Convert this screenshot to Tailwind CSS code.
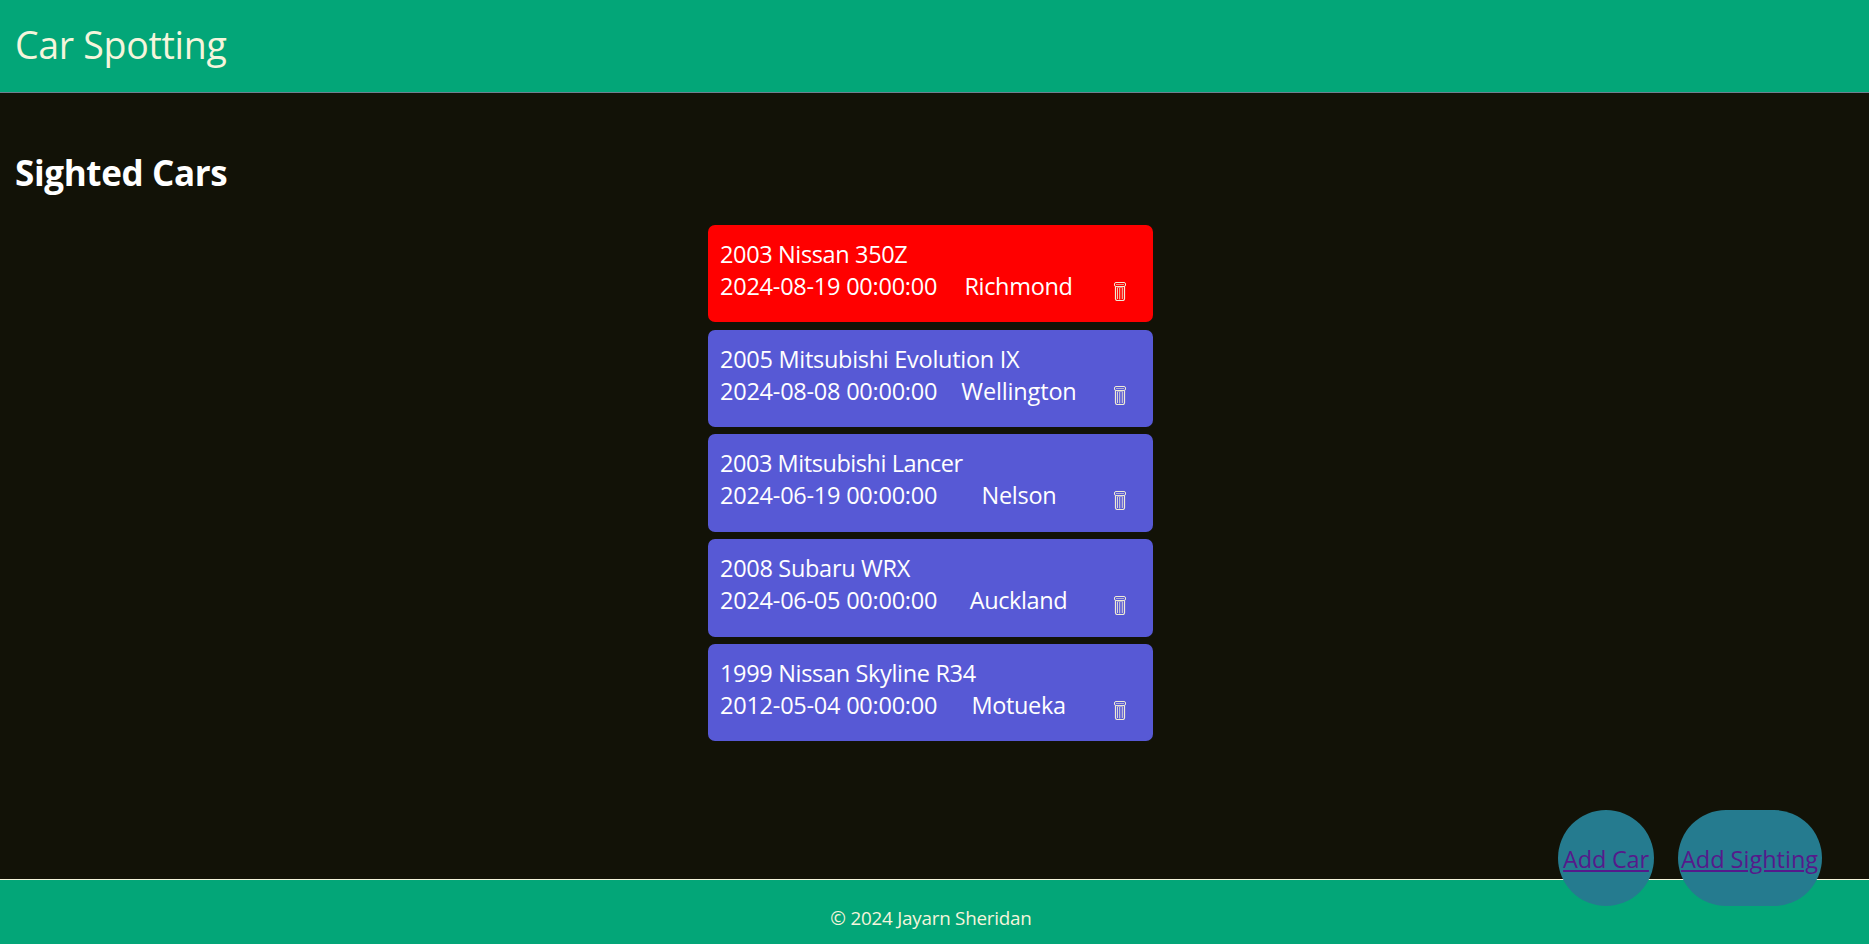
<!DOCTYPE html>
<html lang="en">
<head>
<meta charset="utf-8">
<title>Car Spotting</title>
<script src="https://cdn.jsdelivr.net/npm/@tailwindcss/browser@4"></script>
</head>
<body class="relative flex h-screen flex-col overflow-hidden bg-[#121207] font-['Open_Sans',sans-serif] text-white">
<svg class="hidden">
  <symbol id="trash" viewBox="0 0 12 19">
    <g fill="none" stroke="#f0ecd6">
      <rect x=".5" y=".5" width="11" height="4" rx="1.5"/>
      <path d="M2 2.5h8" stroke-opacity=".6"/>
      <path d="M1.5 4.5v12.2q0 1.8 2 1.8h5q2 0 2-1.8V4.5" stroke-width="1.2"/>
      <path d="M3 5.5h6" stroke-opacity=".5"/>
      <path d="M3.5 6v11M5.7 6v11.5M8.3 6v11" stroke-opacity=".85"/>
    </g>
  </symbol>
</svg>
<header class="h-[93px] shrink-0 border-b border-[#708090] bg-[#03a678] px-[15px] pt-[18px]">
  <h1 class="text-[37.5px] leading-[53px] tracking-[-0.3px] text-[#f5f5dc]">Car Spotting</h1>
</header>
<main class="flex flex-1 flex-col">
  <h2 class="mt-[56px] px-[15px] text-[35px] leading-[48px] font-bold tracking-[-0.36px]">Sighted Cars</h2>
  <ul class="mt-[27.8px] ml-[708px] flex w-[445px] flex-col gap-[7.4px] text-[23.5px] leading-8 whitespace-nowrap">
    <li class="h-[97.4px] rounded-[7px] bg-[#ff0000] pt-[13px] pl-3">
      <p class="tracking-[-0.364px]">2003 Nissan 350Z</p>
      <div class="flex">
        <span class="w-[226px] tracking-[-0.236px]">2024-08-19 00:00:00</span>
        <span class="w-[145px] text-center tracking-[-0.32px]">Richmond</span>
        <svg class="mt-3 ml-[23px] h-[19px] w-3"><use href="#trash"/></svg>
      </div>
    </li>
    <li class="h-[97.4px] rounded-[7px] bg-[#5759d5] pt-[13px] pl-3">
      <p class="tracking-[-0.284px]">2005 Mitsubishi Evolution IX</p>
      <div class="flex">
        <span class="w-[226px] tracking-[-0.236px]">2024-08-08 00:00:00</span>
        <span class="w-[146px] text-center tracking-[-0.153px]">Wellington</span>
        <svg class="mt-[11px] ml-[22px] h-[19px] w-3"><use href="#trash"/></svg>
      </div>
    </li>
    <li class="h-[97.4px] rounded-[7px] bg-[#5759d5] pt-[13px] pl-3">
      <p class="tracking-[-0.45px]">2003 Mitsubishi Lancer</p>
      <div class="flex">
        <span class="w-[226px] tracking-[-0.236px]">2024-06-19 00:00:00</span>
        <span class="w-[146px] text-center tracking-[-0.25px]">Nelson</span>
        <svg class="mt-3 ml-[22px] h-[19px] w-3"><use href="#trash"/></svg>
      </div>
    </li>
    <li class="h-[97.4px] rounded-[7px] bg-[#5759d5] pt-[13px] pl-3">
      <p class="tracking-[-0.301px]">2008 Subaru WRX</p>
      <div class="flex">
        <span class="w-[226px] tracking-[-0.236px]">2024-06-05 00:00:00</span>
        <span class="w-[145px] text-center tracking-[-0.397px]">Auckland</span>
        <svg class="mt-3 ml-[23px] h-[19px] w-3"><use href="#trash"/></svg>
      </div>
    </li>
    <li class="h-[97.4px] rounded-[7px] bg-[#5759d5] pt-[13px] pl-3">
      <p class="tracking-[-0.33px]">1999 Nissan Skyline R34</p>
      <div class="flex">
        <span class="w-[226px] tracking-[-0.236px]">2012-05-04 00:00:00</span>
        <span class="w-[145px] text-center tracking-[-0.35px]">Motueka</span>
        <svg class="mt-3 ml-[23px] h-[19px] w-3"><use href="#trash"/></svg>
      </div>
    </li>
  </ul>
</main>
<footer class="h-[65px] shrink-0 border-t border-[#f5f5dc] bg-[#03a678] pt-[25px] pr-[7px] text-center text-[18.8px] leading-[26px] tracking-[-0.212px] text-[#f5f5dc]">© 2024 Jayarn Sheridan</footer>
<nav class="absolute right-[47px] bottom-[38px] flex gap-6 text-[23.5px] leading-8 whitespace-nowrap text-[#551a8b]">
  <a href="#" class="flex h-24 w-24 items-center justify-center rounded-full bg-[#257b8f] pt-[2px] underline decoration-2 underline-offset-2"><span class="tracking-[-0.2px]">Add Car</span></a>
  <a href="#" class="flex h-24 w-36 items-center justify-center rounded-[48px] bg-[#257b8f] pt-[2px] pr-px underline decoration-2 underline-offset-2"><span>Add Sighting</span></a>
</nav>
</body>
</html>
